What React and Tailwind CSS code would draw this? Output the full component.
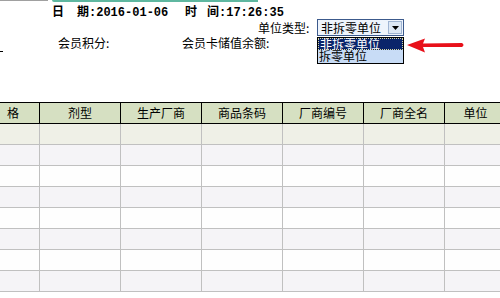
import React from 'react';

const cols = ['剂型', '生产厂商', '商品条码', '厂商编号', '厂商全名'];

const rowBg = (i) => {
  if (i === 0) return 'bg-[#eff0e7]';
  return i % 2 === 1 ? 'bg-[#f5f4f7]' : 'bg-[#fefefe]';
};

const UnitSelect = () => (
  <div className="relative w-[87px] h-[17px] border border-[#3c5a8c] bg-[#eef4fc] flex items-center">
    <span className="pl-[3px] text-[12px] leading-[12px] text-black">非拆零单位</span>
    <div className="ml-auto mr-[1px] w-[14px] h-[13px] bg-[#dde8f5] border border-[#9fb4d2] flex items-center justify-center">
      <svg width="7" height="4" viewBox="0 0 7 4"><path d="M0 0h7L3.5 4z" fill="#000" /></svg>
    </div>

    {/* open list */}
    <div className="absolute left-[-1px] top-[17px] w-[87px] h-[27px] border border-black bg-[#c8dcf6] flex flex-col">
      <div className="h-[12px] bg-[#0a246a] border border-dotted border-[#d8d8a0] text-white text-[12px] leading-[10px] pl-[1px]">非拆零单位</div>
      <div className="h-[12px] text-black text-[12px] leading-[12px] pl-[1px]">拆零单位</div>
    </div>

    {/* red pointer */}
    <svg className="absolute left-[88px] top-[18px]" width="60" height="16" viewBox="0 0 60 16">
      <path d="M1 7 L19 0.5 L17 5.5 L56 5 Q59 7 56 9 L17 9 L19 14.5 Z" fill="#e8101a" />
    </svg>
  </div>
);

export default function App() {
  return (
    <div className="w-[500px] h-[298px] overflow-hidden bg-white text-black" style={{ fontFamily: '"Noto Sans CJK SC", "Liberation Sans", sans-serif' }}>
      <div className="h-[102px] flex flex-col">
        <div className="flex items-start h-[2px]">
          <div className="w-[48px] h-px bg-[#a0a0a0]" />
          <div className="ml-[4px] w-[206px] h-[2px] bg-[#5fb7a0] rounded-bl-[2px]" />
        </div>

        <div className="mt-[6px] h-[10px] pl-[52px] flex text-[12px] leading-[10px] font-bold" style={{ fontFamily: '"Liberation Mono", "Noto Sans CJK SC", monospace' }}>
          <div className="w-[133px] flex">
            <span className="w-[25px]">日</span>
            <span>期</span>
            <span>:2016-01-06</span>
          </div>
          <span className="w-[22px]">时</span>
          <span>间</span>
          <span>:17:26:35</span>
        </div>

        <div className="mt-px h-[17px] pl-[258px] flex items-center text-[12px] leading-[12px]">
          <span className="w-[59px]">单位类型:</span>
          <UnitSelect />
        </div>

        <div className="h-[16px] flex items-start text-[12px] leading-[14px]">
          <div className="w-[3px] h-px bg-black self-end" />
          <span className="ml-[55px] w-[124px]">会员积分:</span>
          <span>会员卡储值余额:</span>
        </div>
      </div>

      <div className="text-[12px]">
        <div className="flex h-[22px] border-y border-black bg-[#d6e0c2]">
          <div className="w-[40px] border-r border-black flex items-center pl-[7px]">格</div>
          {cols.map((c) => (
            <div key={c} className="w-[81px] border-r border-black flex items-center justify-center">{c}</div>
          ))}
          <div className="flex-1 flex items-center justify-center pl-[6px]">单位</div>
        </div>
        {Array.from({ length: 8 }).map((_, i) => (
          <div key={i} className={`flex h-[21px] border-b border-[#c0c0c0] ${rowBg(i)}`}>
            <div className="w-[40px] border-r border-[#c0c0c0]" />
            {cols.map((c) => (
              <div key={c} className="w-[81px] border-r border-[#c0c0c0]" />
            ))}
            <div className="flex-1" />
          </div>
        ))}
      </div>
    </div>
  );
}
